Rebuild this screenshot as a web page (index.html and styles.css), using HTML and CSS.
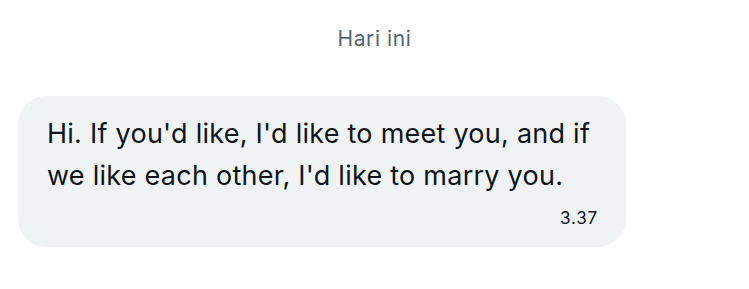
FILE: index.html
```html
<!DOCTYPE html>
<html lang="id">
<head>
    <meta charset="UTF-8">
    <meta name="viewport" content="width=device-width, initial-scale=1.0">
    <title>Pesan</title>
    <link rel="stylesheet" href="styles.css">
</head>
<body>
    <div class="chat">
        <div class="day">Hari ini</div>
        <div class="bubble">
            <p class="text">Hi. If you'd like, I'd like to meet you, and if<br>we like each other, I'd like to marry you.</p>
            <div class="time">3.37</div>
        </div>
    </div>
</body>
</html>
```

FILE: styles.css
```css
body {
    margin: 0;
    background: #ffffff;
    font-family: Inter, Roboto, "Noto Sans", Arial, sans-serif;
    color: #0f1419;
}
.chat {
    width: 749px;
    height: 289px;
    padding-top: 27px;
    box-sizing: border-box;
}
.day {
    text-align: center;
    color: #536471;
    font-size: 21px;
    line-height: 24px;
    letter-spacing: 0.6px;
}
.bubble {
    margin: 45px 0 0 18px;
    width: 608px;
    height: 151px;
    box-sizing: border-box;
    background: #eff3f4;
    border-radius: 28px;
    padding: 17px 28px 0 29px;
}
.text {
    margin: 0;
    font-size: 27px;
    line-height: 42px;
    letter-spacing: 0.25px;
}
.time {
    text-align: right;
    font-size: 17px;
    line-height: 20px;
    letter-spacing: 0.8px;
    margin-top: 11px;
}
```
